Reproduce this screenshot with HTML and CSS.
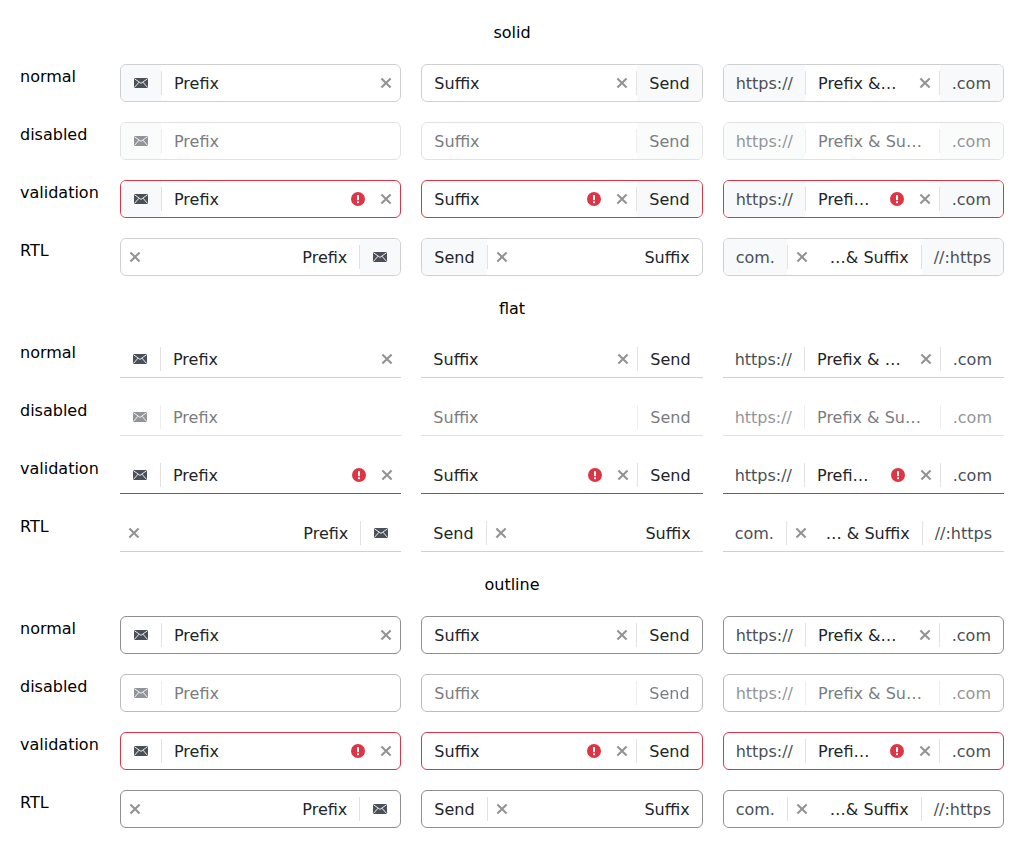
FILE: index.html
```html
<!DOCTYPE html>
<html lang="en">
<head>
<meta charset="utf-8">
<title>Input groups</title>
<link rel="stylesheet" href="styles.css">
</head>
<body>
<svg class="defs" xmlns="http://www.w3.org/2000/svg">
  <symbol id="mail" viewBox="0 0 14 10"><rect width="14" height="10" fill="currentColor"/><path d="M0.3 0.6L7 5.4L13.7 0.6M0.3 9.6L5 4.2M13.7 9.6L9 4.2" fill="none" stroke="#fff" stroke-width="0.9"/></symbol>
  <symbol id="x" viewBox="0 0 16 16"><path d="M3.4 3.4L12.6 12.6M12.6 3.4L3.4 12.6" fill="none" stroke="currentColor" stroke-width="2.1"/></symbol>
  <symbol id="err" viewBox="0 0 14 14"><circle cx="7" cy="7" r="7" fill="currentColor"/><rect x="6" y="3" width="2" height="5.2" rx="0.6" fill="#fff"/><rect x="6" y="9.2" width="2" height="2" rx="0.6" fill="#fff"/></symbol>
</svg>
<main class="page">

  <h2 class="title">solid</h2>
  <div class="label">normal</div>
  <div class="field solid"><span class="addon"><svg class="mail"><use href="#mail"/></svg></span><i class="sep"></i><div class="input">Prefix</div><svg class="clear"><use href="#x"/></svg></div>
  <div class="field solid"><div class="input">Suffix</div><svg class="clear"><use href="#x"/></svg><i class="sep"></i><span class="addon action">Send</span></div>
  <div class="field solid"><span class="addon">https://</span><i class="sep"></i><div class="input">Prefix &amp; Suffix</div><svg class="clear"><use href="#x"/></svg><i class="sep"></i><span class="addon">.com</span></div>
  <div class="label">disabled</div>
  <div class="field solid disabled"><span class="addon"><svg class="mail"><use href="#mail"/></svg></span><i class="sep"></i><div class="input">Prefix</div></div>
  <div class="field solid disabled"><div class="input">Suffix</div><i class="sep"></i><span class="addon action">Send</span></div>
  <div class="field solid disabled"><span class="addon">https://</span><i class="sep"></i><div class="input">Prefix &amp; Suffix</div><i class="sep"></i><span class="addon">.com</span></div>
  <div class="label">validation</div>
  <div class="field solid invalid"><span class="addon"><svg class="mail"><use href="#mail"/></svg></span><i class="sep"></i><div class="input">Prefix</div><svg class="err"><use href="#err"/></svg><svg class="clear"><use href="#x"/></svg></div>
  <div class="field solid invalid"><div class="input">Suffix</div><svg class="err"><use href="#err"/></svg><svg class="clear"><use href="#x"/></svg><i class="sep"></i><span class="addon action">Send</span></div>
  <div class="field solid invalid"><span class="addon">https://</span><i class="sep"></i><div class="input">Prefix &amp; Suffix</div><svg class="err"><use href="#err"/></svg><svg class="clear"><use href="#x"/></svg><i class="sep"></i><span class="addon">.com</span></div>
  <div class="label">RTL</div>
  <div class="field solid" dir="rtl"><span class="addon"><svg class="mail"><use href="#mail"/></svg></span><i class="sep"></i><div class="input">Prefix</div><svg class="clear"><use href="#x"/></svg></div>
  <div class="field solid" dir="rtl"><div class="input">Suffix</div><svg class="clear"><use href="#x"/></svg><i class="sep"></i><span class="addon action">Send</span></div>
  <div class="field solid" dir="rtl"><span class="addon">https://</span><i class="sep"></i><div class="input">Prefix &amp; Suffix</div><svg class="clear"><use href="#x"/></svg><i class="sep"></i><span class="addon">.com</span></div>

  <h2 class="title">flat</h2>
  <div class="label">normal</div>
  <div class="field flat"><span class="addon"><svg class="mail"><use href="#mail"/></svg></span><i class="sep"></i><div class="input">Prefix</div><svg class="clear"><use href="#x"/></svg></div>
  <div class="field flat"><div class="input">Suffix</div><svg class="clear"><use href="#x"/></svg><i class="sep"></i><span class="addon action">Send</span></div>
  <div class="field flat"><span class="addon">https://</span><i class="sep"></i><div class="input">Prefix &amp; Suffix</div><svg class="clear"><use href="#x"/></svg><i class="sep"></i><span class="addon">.com</span></div>
  <div class="label">disabled</div>
  <div class="field flat disabled"><span class="addon"><svg class="mail"><use href="#mail"/></svg></span><i class="sep"></i><div class="input">Prefix</div></div>
  <div class="field flat disabled"><div class="input">Suffix</div><i class="sep"></i><span class="addon action">Send</span></div>
  <div class="field flat disabled"><span class="addon">https://</span><i class="sep"></i><div class="input">Prefix &amp; Suffix</div><i class="sep"></i><span class="addon">.com</span></div>
  <div class="label">validation</div>
  <div class="field flat invalid"><span class="addon"><svg class="mail"><use href="#mail"/></svg></span><i class="sep"></i><div class="input">Prefix</div><svg class="err"><use href="#err"/></svg><svg class="clear"><use href="#x"/></svg></div>
  <div class="field flat invalid"><div class="input">Suffix</div><svg class="err"><use href="#err"/></svg><svg class="clear"><use href="#x"/></svg><i class="sep"></i><span class="addon action">Send</span></div>
  <div class="field flat invalid"><span class="addon">https://</span><i class="sep"></i><div class="input">Prefix &amp; Suffix</div><svg class="err"><use href="#err"/></svg><svg class="clear"><use href="#x"/></svg><i class="sep"></i><span class="addon">.com</span></div>
  <div class="label">RTL</div>
  <div class="field flat" dir="rtl"><span class="addon"><svg class="mail"><use href="#mail"/></svg></span><i class="sep"></i><div class="input">Prefix</div><svg class="clear"><use href="#x"/></svg></div>
  <div class="field flat" dir="rtl"><div class="input">Suffix</div><svg class="clear"><use href="#x"/></svg><i class="sep"></i><span class="addon action">Send</span></div>
  <div class="field flat" dir="rtl"><span class="addon">https://</span><i class="sep"></i><div class="input">Prefix &amp; Suffix</div><svg class="clear"><use href="#x"/></svg><i class="sep"></i><span class="addon">.com</span></div>

  <h2 class="title">outline</h2>
  <div class="label">normal</div>
  <div class="field outline"><span class="addon"><svg class="mail"><use href="#mail"/></svg></span><i class="sep"></i><div class="input">Prefix</div><svg class="clear"><use href="#x"/></svg></div>
  <div class="field outline"><div class="input">Suffix</div><svg class="clear"><use href="#x"/></svg><i class="sep"></i><span class="addon action">Send</span></div>
  <div class="field outline"><span class="addon">https://</span><i class="sep"></i><div class="input">Prefix &amp; Suffix</div><svg class="clear"><use href="#x"/></svg><i class="sep"></i><span class="addon">.com</span></div>
  <div class="label">disabled</div>
  <div class="field outline disabled"><span class="addon"><svg class="mail"><use href="#mail"/></svg></span><i class="sep"></i><div class="input">Prefix</div></div>
  <div class="field outline disabled"><div class="input">Suffix</div><i class="sep"></i><span class="addon action">Send</span></div>
  <div class="field outline disabled"><span class="addon">https://</span><i class="sep"></i><div class="input">Prefix &amp; Suffix</div><i class="sep"></i><span class="addon">.com</span></div>
  <div class="label">validation</div>
  <div class="field outline invalid"><span class="addon"><svg class="mail"><use href="#mail"/></svg></span><i class="sep"></i><div class="input">Prefix</div><svg class="err"><use href="#err"/></svg><svg class="clear"><use href="#x"/></svg></div>
  <div class="field outline invalid"><div class="input">Suffix</div><svg class="err"><use href="#err"/></svg><svg class="clear"><use href="#x"/></svg><i class="sep"></i><span class="addon action">Send</span></div>
  <div class="field outline invalid"><span class="addon">https://</span><i class="sep"></i><div class="input">Prefix &amp; Suffix</div><svg class="err"><use href="#err"/></svg><svg class="clear"><use href="#x"/></svg><i class="sep"></i><span class="addon">.com</span></div>
  <div class="label">RTL</div>
  <div class="field outline" dir="rtl"><span class="addon"><svg class="mail"><use href="#mail"/></svg></span><i class="sep"></i><div class="input">Prefix</div><svg class="clear"><use href="#x"/></svg></div>
  <div class="field outline" dir="rtl"><div class="input">Suffix</div><svg class="clear"><use href="#x"/></svg><i class="sep"></i><span class="addon action">Send</span></div>
  <div class="field outline" dir="rtl"><span class="addon">https://</span><i class="sep"></i><div class="input">Prefix &amp; Suffix</div><svg class="clear"><use href="#x"/></svg><i class="sep"></i><span class="addon">.com</span></div>

</main>
</body>
</html>
```

FILE: styles.css
```css
html, body {
  margin: 0;
  padding: 0;
  background: #fff;
}
body {
  font: 16px/24px "DejaVu Sans", sans-serif;
  color: #000;
}
.defs {
  display: none;
}
.page {
  display: grid;
  grid-template-columns: 80px repeat(3, minmax(0, 1fr));
  gap: 20px;
  padding: 20px;
}
.title {
  grid-column: 1 / -1;
  box-sizing: border-box;
  height: 24px;
  margin: 0;
  padding-top: 1px;
  font: inherit;
  text-align: center;
}
.label {
  box-sizing: border-box;
  height: 24px;
  padding-top: 1px;
}
.field {
  display: flex;
  align-items: center;
  box-sizing: border-box;
  height: 38px;
  min-width: 0;
  overflow: hidden;
  border: 1px solid #d0d0d0;
  border-radius: 6px;
  color: #212529;
  background: #fff;
}
.addon {
  flex: none;
  align-self: stretch;
  display: flex;
  align-items: center;
  padding: 2px 12px 0;
  color: #495057;
  background: #f8f9fa;
  white-space: nowrap;
}
.addon.action {
  color: #212529;
}
.sep {
  flex: none;
  width: 1px;
  height: 24px;
  background: #e2e2e2;
}
.input {
  flex: 1 1 0;
  min-width: 0;
  padding: 2px 12px 0;
  overflow: hidden;
  white-space: nowrap;
  text-overflow: ellipsis;
}
.mail {
  display: block;
  width: 14px;
  height: 10px;
  margin: -2px 1px 0;
  color: #495057;
}
.clear {
  flex: none;
  width: 16px;
  height: 16px;
  margin-inline: 4px 6px;
  color: #939393;
}
.err {
  flex: none;
  width: 14px;
  height: 14px;
  margin-inline: 2px 9px;
  color: #dc3545;
}
.invalid.solid,
.invalid.outline {
  border-color: #dc3545;
}
.flat {
  border-width: 1px 0;
  border-top-color: transparent;
  border-radius: 0;
}
.flat .addon,
.outline .addon {
  background: transparent;
}
.flat.invalid {
  border-bottom-color: #c23a48;
}
.outline {
  border-color: #8e8e8e;
}
.disabled {
  opacity: 0.6;
}
```
